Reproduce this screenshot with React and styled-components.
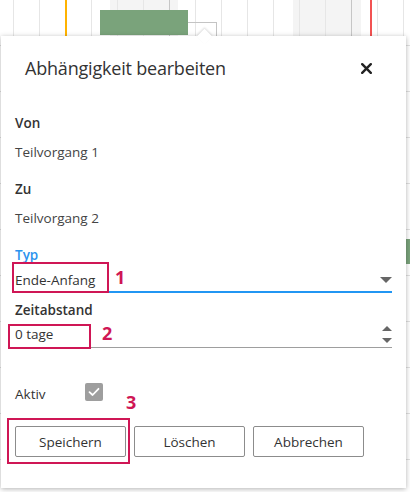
import React from 'react'
import styled, { createGlobalStyle } from 'styled-components'

const GlobalStyle = createGlobalStyle`
  html, body {
    margin: 0;
    padding: 0;
    background: #fff;
  }

  body {
    font-family: 'Open Sans', 'Noto Sans', sans-serif;
    color: #333;
  }
`

const ACCENT = '#cf1655'

export default function App() {
  return (
    <>
      <GlobalStyle />
      <Stage>
        <Chart>
          <Shade style={{ left: 110 }} />
          <Shade style={{ left: 293 }} />
          <GridLines />
          <WeekLine style={{ left: 169 }} />
          <WeekLine style={{ left: 351 }} />
          <Marker $color="#ffb300" style={{ left: 65 }} />
          <Marker $color="#f25252" style={{ left: 370 }} />
          <TaskBar style={{ left: 100, top: 10, width: 88 }} />
          <TaskBar style={{ left: 405, top: 239, width: 40 }} />
          <Connector />
        </Chart>

        <Dialog>
          <Header>
            <Title>Abhängigkeit bearbeiten</Title>
            <CloseButton aria-label="Schließen">
              <svg width="11" height="11" viewBox="0 0 11 11">
                <path
                  d="M1.2 1.2 L9.8 9.8 M9.8 1.2 L1.2 9.8"
                  stroke="#222"
                  strokeWidth="2.4"
                  strokeLinecap="round"
                />
              </svg>
            </CloseButton>
          </Header>

          <Body>
            <Label>Von</Label>
            <Value>Teilvorgang 1</Value>

            <Label $spaced>Zu</Label>
            <Value>Teilvorgang 2</Value>

            <Label $spaced $active>
              Typ
            </Label>
            <SelectField>
              <span>Ende-Anfang</span>
              <Caret />
              <Callout style={{ left: -3, top: -3, width: 97, height: 31 }} />
              <CalloutNumber style={{ left: 100, top: 1 }}>1</CalloutNumber>
            </SelectField>

            <Label $top={7}>Zeitabstand</Label>
            <NumberField>
              <span>0 tage</span>
              <Spinner>
                <SpinUp />
                <SpinDown />
              </Spinner>
              <Callout style={{ left: -7, top: 4, width: 83, height: 25 }} />
              <CalloutNumber style={{ left: 87, top: 2 }}>2</CalloutNumber>
            </NumberField>

            <ActiveRow>
              <ActiveLabel>Aktiv</ActiveLabel>
              <CheckBox>
                <svg width="12" height="10" viewBox="0 0 12 10">
                  <path
                    d="M1.5 5.2 L4.6 8 L10.5 1.8"
                    fill="none"
                    stroke="#fff"
                    strokeWidth="1.8"
                    strokeLinecap="round"
                    strokeLinejoin="round"
                  />
                </svg>
              </CheckBox>
            </ActiveRow>

            <ButtonRow>
              <Button>Speichern</Button>
              <Button>Löschen</Button>
              <Button>Abbrechen</Button>
              <Callout style={{ left: -8, top: -8, width: 123, height: 46 }} />
              <CalloutNumber style={{ left: 111, top: -35 }}>3</CalloutNumber>
            </ButtonRow>
          </Body>
        </Dialog>
      </Stage>
    </>
  )
}

const Stage = styled.div`
  position: relative;
  width: 410px;
  height: 492px;
  overflow: hidden;
  background: #fff;
`

const Chart = styled.div`
  position: absolute;
  left: 0;
  right: 0;
  top: 0;
  height: 486px;
  overflow: hidden;
`

const Shade = styled.div`
  position: absolute;
  top: 0;
  bottom: 0;
  width: 68px;
  background: #f4f4f4;
`

const GridLines = styled.div`
  position: absolute;
  inset: 0;
  background-image:
    linear-gradient(to right, #e6e6e6 1px, transparent 1px),
    linear-gradient(to bottom, #e0e0e0 1px, transparent 1px);
  background-size: 26px 100%, 100% 46px;
  background-position: 13px 0, 0 45px;
`

const WeekLine = styled.div`
  position: absolute;
  top: 0;
  bottom: 0;
  width: 1px;
  background: #c6c6c6;
`

const Marker = styled.div`
  position: absolute;
  top: 0;
  bottom: 0;
  width: 2px;
  background: ${(p) => p.$color};
`

const TaskBar = styled.div`
  position: absolute;
  height: 25px;
  background: #7aa37b;
`

const Connector = styled.div`
  position: absolute;
  left: 188px;
  top: 22px;
  width: 28px;
  height: 40px;
  border-top: 1px solid #c4c4c4;
  border-right: 1px solid #c4c4c4;
`

const Dialog = styled.div`
  position: absolute;
  left: 1px;
  top: 36px;
  width: 405px;
  height: 452px;
  box-sizing: border-box;
  background: #fff;
  box-shadow: 0 1px 5px rgba(0, 0, 0, 0.3);

  &::before {
    content: '';
    position: absolute;
    left: 198px;
    top: -5px;
    width: 11px;
    height: 11px;
    background: #fff;
    transform: rotate(45deg);
    box-shadow: -1px -1px 2px rgba(0, 0, 0, 0.12);
  }
`

const Header = styled.div`
  position: relative;
  display: flex;
  align-items: center;
  justify-content: space-between;
  padding: 20px 34px 0 24px;
  height: 24px;
`

const Title = styled.h2`
  margin: 0;
  font-size: 18px;
  font-weight: 500;
  line-height: 24px;
  color: #333;
  letter-spacing: -0.2px;
`

const CloseButton = styled.button`
  display: flex;
  align-items: center;
  justify-content: center;
  padding: 0;
  border: none;
  background: none;
  cursor: pointer;
`

const Body = styled.div`
  display: flex;
  flex-direction: column;
  padding: 33px 14px 0 14px;
`

const Label = styled.div`
  margin-top: ${(p) => (p.$top ? `${p.$top}px` : p.$spaced ? '17px' : '0')};
  font-size: 13.5px;
  font-weight: 600;
  line-height: 20px;
  color: ${(p) => (p.$active ? '#2a93ee' : '#333')};
`

const Value = styled.div`
  margin-top: 9px;
  font-size: 13.5px;
  line-height: 20px;
  color: #444;
`

const SelectField = styled.div`
  position: relative;
  display: flex;
  align-items: center;
  justify-content: space-between;
  padding: 5px 0 1px;
  line-height: 20px;
  font-size: 13.5px;
  color: #333;
  border-bottom: 2px solid #2196f3;
`

const Caret = styled.span`
  width: 0;
  height: 0;
  border-left: 6px solid transparent;
  border-right: 6px solid transparent;
  border-top: 6px solid #666;
`

const NumberField = styled.div`
  position: relative;
  display: flex;
  align-items: center;
  justify-content: space-between;
  padding: 4px 0 3px;
  line-height: 20px;
  font-size: 13.5px;
  color: #333;
  border-bottom: 1px solid #9e9e9e;
`

const Spinner = styled.span`
  display: flex;
  flex-direction: column;
  gap: 7px;
`

const SpinUp = styled.span`
  width: 0;
  height: 0;
  border-left: 5px solid transparent;
  border-right: 5px solid transparent;
  border-bottom: 5px solid #666;
`

const SpinDown = styled.span`
  width: 0;
  height: 0;
  border-left: 5px solid transparent;
  border-right: 5px solid transparent;
  border-top: 5px solid #666;
`

const Callout = styled.span`
  position: absolute;
  box-sizing: border-box;
  border: 2px solid ${ACCENT};
  pointer-events: none;
`

const CalloutNumber = styled.span`
  position: absolute;
  font-size: 18px;
  font-weight: 700;
  line-height: 22px;
  color: ${ACCENT};
`

const ActiveRow = styled.div`
  display: flex;
  align-items: center;
  margin-top: 35px;
  height: 18px;
`

const ActiveLabel = styled.span`
  width: 70px;
  padding-top: 4px;
  font-size: 13.5px;
  font-weight: 500;
  color: #333;
`

const CheckBox = styled.span`
  display: flex;
  align-items: center;
  justify-content: center;
  width: 18px;
  height: 18px;
  border-radius: 2px;
  background: #9e9e9e;
`

const ButtonRow = styled.div`
  position: relative;
  display: flex;
  gap: 8px;
  margin-top: 25px;
`

const Button = styled.button`
  width: 111px;
  height: 31px;
  padding: 0;
  border: 1px solid #8c8c8c;
  border-radius: 2px;
  background: #fff;
  font-family: inherit;
  font-size: 13.5px;
  font-weight: 500;
  color: #333;
  cursor: pointer;
`
